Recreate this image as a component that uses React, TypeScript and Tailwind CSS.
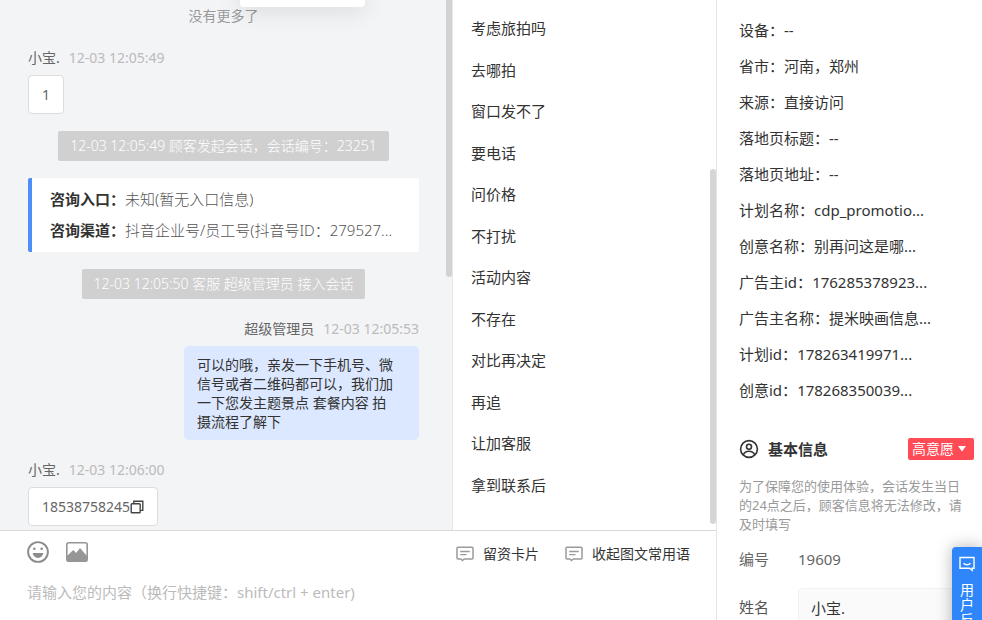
import type { ReactNode } from "react"

const quickReplies = [
  "考虑旅拍吗",
  "去哪拍",
  "窗口发不了",
  "要电话",
  "问价格",
  "不打扰",
  "活动内容",
  "不存在",
  "对比再决定",
  "再追",
  "让加客服",
  "拿到联系后",
]

const visitInfo = [
  { label: "设备", value: "--" },
  { label: "省市", value: "河南，郑州" },
  { label: "来源", value: "直接访问" },
  { label: "落地页标题", value: "--" },
  { label: "落地页地址", value: "--" },
  { label: "计划名称", value: "cdp_promotio..." },
  { label: "创意名称", value: "别再问这是哪..." },
  { label: "广告主id", value: "176285378923..." },
  { label: "广告主名称", value: "提米映画信息..." },
  { label: "计划id", value: "178263419971..." },
  { label: "创意id", value: "178268350039..." },
]

function SmileIcon() {
  return (
    <svg className="size-[22px]" viewBox="0 0 22 22" fill="none" aria-hidden="true">
      <circle cx="11" cy="11" r="9.9" stroke="#8c8c8c" strokeWidth="1.9" />
      <circle cx="7.3" cy="7.8" r="1.3" fill="#8c8c8c" />
      <circle cx="14.7" cy="7.8" r="1.3" fill="#8c8c8c" />
      <path d="M5.6 12h10.800c-.5 3-2.600 4.900-5.400 4.900s-4.900-1.900-5.400-4.900z" fill="#8c8c8c" />
    </svg>
  )
}

function PictureIcon() {
  return (
    <svg className="h-5 w-[22px]" viewBox="0 0 22 20" fill="none" aria-hidden="true">
      <rect x=".8" y=".8" width="20.4" height="18.400" rx="2" stroke="#969696" strokeWidth="1.6" />
      <path d="M1 14l6.200-6 3 3 3.800-5 7 8v4a1.500 1.500 0 0 1-1.500 1.500h-17A1.500 1.500 0 0 1 1 18z" fill="#969696" />
    </svg>
  )
}

function CardIcon() {
  return (
    <svg className="h-4 w-[18px]" viewBox="0 0 18 16" fill="none" stroke="#9a9a9a" aria-hidden="true">
      <path
        d="M2 1.200h14a1 1 0 0 1 1 1v9.800a1 1 0 0 1-1 1H8.200l-1.700 1.500L4.900 13H2a1 1 0 0 1-1-1V2.200a1 1 0 0 1 1-1z"
        strokeWidth="1.5"
      />
      <path d="M4.200 5.500h9.600M4.200 8.700h6.300" strokeWidth="1.3" />
    </svg>
  )
}

function CopyIcon() {
  return (
    <svg className="size-[14px]" viewBox="0 0 14 14" fill="none" stroke="#444" strokeWidth="1.400" aria-hidden="true">
      <rect x="1.200" y="3.700" width="9" height="9" rx=".8" />
      <path d="M3.800 3.500V1.200h9v9.200h-2.400" />
    </svg>
  )
}

function UserIcon() {
  return (
    <svg className="size-5" viewBox="0 0 20 20" fill="none" stroke="#333" strokeWidth="1.600" aria-hidden="true">
      <circle cx="10" cy="10" r="8.400" />
      <circle cx="10" cy="7.700" r="2.500" />
      <path d="M4.300 15.800c1-2.300 3-3.600 5.700-3.600s4.700 1.300 5.700 3.600" />
    </svg>
  )
}

function FeedbackIcon() {
  return (
    <svg className="size-4" viewBox="0 0 16 16" fill="none" stroke="#fff" strokeWidth="1.400" aria-hidden="true">
      <path d="M1 1.500h14v10.800h-1.800v2l-2.600-2H1z" />
      <path d="M4.500 7.200c1.800 2 5.200 2 7 0" />
    </svg>
  )
}

function Sender({ name, time, right }: { name: string; time: string; right?: boolean }) {
  return (
    <div className={`mb-1 flex h-[26px] items-center gap-[9px] text-sm ${right ? "justify-end" : ""}`}>
      <span className="text-[#666]">{name}</span>
      <time className="text-[#bbb]">{time}</time>
    </div>
  )
}

function Notice({ children }: { children: ReactNode }) {
  return (
    <p className="self-center rounded-xs bg-[#d0d0d0] px-3 text-sm leading-[30px] font-light whitespace-nowrap text-white">
      {children}
    </p>
  )
}

function Chat() {
  return (
    <section className="relative min-w-0 flex-1 overflow-hidden border-r border-[#e6e7e9] bg-[#f3f4f6]">
      <div className="flex flex-col gap-[17px] pt-1 pr-[33px] pl-7">
        <p className="text-center text-sm leading-6 text-[#999]">没有更多了</p>

        <div>
          <Sender name="小宝." time="12-03 12:05:49" />
          <p className="w-fit rounded-sm border border-[#dcdcdc] bg-white px-[13px] py-[9px] text-sm leading-[19px] text-[#666]">
            1
          </p>
        </div>

        <Notice>12-03 12:05:49 顾客发起会话，会话编号：23251</Notice>

        <dl className="rounded-xs border-l-4 border-[#4e8ff7] bg-white py-1.5 pr-6 pl-[18px] text-[15px] leading-[31px]">
          <div className="flex">
            <dt className="shrink-0 font-bold text-[#333]">咨询入口：</dt>
            <dd className="truncate font-light text-[#555]">未知(暂无入口信息)</dd>
          </div>
          <div className="flex">
            <dt className="shrink-0 font-bold text-[#333]">咨询渠道：</dt>
            <dd className="font-light whitespace-nowrap text-[#555]">抖音企业号/员工号(抖音号ID：279527...</dd>
          </div>
        </dl>

        <Notice>12-03 12:05:50 客服 超级管理员 接入会话</Notice>

        <div>
          <Sender name="超级管理员" time="12-03 12:05:53" right />
          <p className="ml-auto w-[235px] rounded-[5px] bg-[#dce8ff] py-[9px] pr-[22px] pl-[13px] text-sm leading-[19px] text-[#333]">
            可以的哦，亲发一下手机号、微信号或者二维码都可以，我们加一下您发主题景点 套餐内容 拍摄流程了解下
          </p>
        </div>

        <div>
          <Sender name="小宝." time="12-03 12:06:00" />
          <div className="flex w-fit items-center rounded-sm border border-[#dcdcdc] bg-white px-[13px] py-[9px] text-sm leading-[19px] text-[#666]">
            18538758245
            <button type="button" aria-label="复制">
              <CopyIcon />
            </button>
          </div>
        </div>
      </div>

      {/* bottom edge of the popover hanging from the header */}
      <div className="absolute -top-5 left-[240px] h-[27px] w-[125px] rounded-sm bg-white shadow-[0_4px_24px_rgba(0,0,0,0.1)]" />
      <div className="absolute top-0 right-0 h-[277px] w-1.5 rounded-b-full bg-[#d2d2d2]" />
    </section>
  )
}

function QuickReplies() {
  return (
    <section className="relative w-[263px] shrink-0">
      <ul className="flex h-full flex-col justify-between pt-[17px] pb-[34px] pl-[18px] text-[15px] leading-[22px] text-[#333]">
        {quickReplies.map((text) => (
          <li key={text}>
            <button type="button" className="block">{text}</button>
          </li>
        ))}
      </ul>
      <div className="absolute right-0 bottom-[6px] h-[355px] w-1.5 rounded-full bg-[#d6d6d6]" />
    </section>
  )
}

function Composer() {
  return (
    <section className="h-[90px] shrink-0 border-t border-[#d9d9d9] bg-white">
      <div className="flex h-[42px] items-center pr-[26px] pl-[27px] text-sm text-[#333]">
        <button type="button" aria-label="表情">
          <SmileIcon />
        </button>
        <button type="button" aria-label="图片" className="ml-[17px]">
          <PictureIcon />
        </button>
        <div className="ml-auto flex gap-[26px] pt-[3px]">
          <button type="button" className="flex items-center gap-[9px]">
            <CardIcon />
            留资卡片
          </button>
          <button type="button" className="flex items-center gap-[9px]">
            <CardIcon />
            收起图文常用语
          </button>
        </div>
      </div>
      <textarea
        aria-label="消息内容"
        className="block w-full resize-none px-[27px] pt-[7px] text-[15px] leading-6 outline-none placeholder:text-[#bbb]"
        rows={1}
        placeholder="请输入您的内容（换行快捷键：shift/ctrl + enter)"
      />
    </section>
  )
}

function CustomerPanel() {
  return (
    <aside className="w-[266px] shrink-0 border-l border-[#e4e4e4] bg-white pt-3 pl-[22px] text-[15px] text-[#333]">
      <dl>
        {visitInfo.map(({ label, value }) => (
          <div key={label} className="flex h-9 items-center">
            <dt>{label}：</dt>
            <dd>{value}</dd>
          </div>
        ))}
      </dl>

      <div className="mt-[30px] flex h-[22px] items-center pr-2">
        <UserIcon />
        <h2 className="ml-[9px] font-bold">基本信息</h2>
        <div className="relative ml-auto">
          <select
            aria-label="意愿"
            className="block h-[22px] w-[66px] appearance-none rounded-xs bg-[#ff4b55] pl-1 text-sm leading-[22px] text-white"
          >
            <option>高意愿</option>
          </select>
          <svg className="pointer-events-none absolute top-2 right-2 h-[6px] w-2" viewBox="0 0 8 6" fill="#fff" aria-hidden="true">
            <path d="M0 0h8L4 5.500z" />
          </svg>
        </div>
      </div>

      <p className="mt-[17px] w-[230px] text-[13px] leading-[19px] text-[#999]">
        为了保障您的使用体验，会话发生当日的24点之后，顾客信息将无法修改，请及时填写
      </p>

      <div className="mt-[5px] flex h-10 items-center text-[#666]">
        <span className="w-[59px]">编号</span>
        <span>19609</span>
      </div>
      <div className="mt-[9px] flex h-[38px] items-center">
        <label htmlFor="customer-name" className="w-[59px] shrink-0 text-[#555]">姓名</label>
        <input
          id="customer-name"
          defaultValue="小宝."
          className="h-full min-w-0 flex-1 rounded-sm border border-[#f2f2f2] bg-[#fafafa] px-3 outline-none"
        />
      </div>
    </aside>
  )
}

export default function App() {
  return (
    <main
      lang="zh-CN"
      className="relative flex h-screen overflow-hidden bg-white font-['Noto_Sans','Noto_Sans_CJK_SC',sans-serif]"
    >
      <div className="flex min-w-0 flex-1 flex-col">
        <div className="flex min-h-0 flex-1">
          <Chat />
          <QuickReplies />
        </div>
        <Composer />
      </div>
      <CustomerPanel />

      <button
        type="button"
        className="absolute top-[547px] right-0 flex w-[30px] flex-col items-center rounded-l-sm bg-[#2f86fb] px-2 pt-[9px] pb-3 text-sm leading-[15px] text-white shadow-[0_0_16px_rgba(0,0,0,0.3)]"
      >
        <FeedbackIcon />
        <span className="mt-[10px]">用户反馈</span>
      </button>
    </main>
  )
}
